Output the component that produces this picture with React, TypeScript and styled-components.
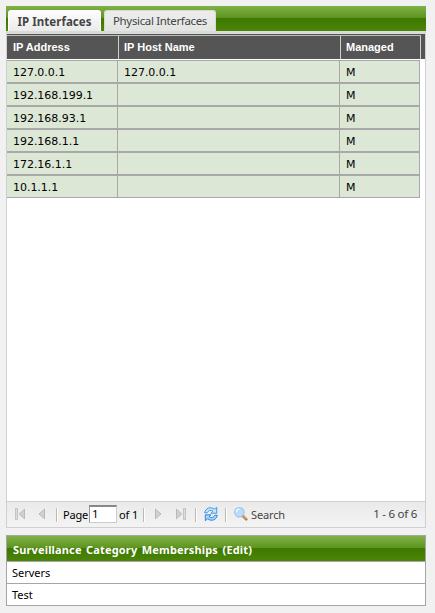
import React from 'react';
import styled, { createGlobalStyle } from 'styled-components';

const GlobalStyle = createGlobalStyle`
  * { box-sizing: border-box; }
  body {
    margin: 0;
    background: #f1f1f1;
    font: 11px 'DejaVu Sans', sans-serif;
    color: #000;
  }
`;

const green = 'linear-gradient(#80b146 0, #5d9420 48%, #3d7800 49%, #4b8608 100%)';

const Page = styled.main`
  width: 435px;
  height: 613px;
  padding: 6px 9px 0 6px;
  overflow: hidden;
`;

const GridPanel = styled.section`
  height: 522px;
  display: flex;
  flex-direction: column;
`;

const TabStrip = styled.nav`
  height: 25px;
  flex: none;
  display: flex;
  gap: 3px;
  padding: 4px 2px 0;
  background: ${green};
`;

const Tab = styled.button<{ $active?: boolean; $width: number }>`
  width: ${p => p.$width}px;
  height: ${p => (p.$active ? 22 : 21)}px;
  margin: 0;
  padding: 0;
  border: 1px solid ${p => (p.$active ? '#fff' : '#d5dccb')};
  border-bottom: 0;
  border-radius: 3px 3px 0 0;
  background: ${p => (p.$active ? 'linear-gradient(#fdfdfd, #e9eae9)' : 'linear-gradient(#ececec, #e3e5e2)')};
  color: #444;
  font: ${p => (p.$active ? "bold 11.5px 'Noto Sans'" : "11.5px 'Noto Sans'")}, sans-serif;
  letter-spacing: ${p => (p.$active ? '0.05px' : '-0.35px')};
  line-height: 20px;
  white-space: nowrap;
`;

const GridBody = styled.div`
  flex: 1;
  display: flex;
  flex-direction: column;
  border: 1px solid #d0d0d0;
  border-top: 3px solid #d8dcd6;
  background: #fff;
`;

const HeaderRow = styled.div`
  display: grid;
  grid-template-columns: 112px 222px 80px 4px;
  height: 25px;
  flex: none;
  background: #555;
  border-top: 1px solid #555;
`;

const HeaderCell = styled.div`
  border-top: 1px solid #bbb;
  border-right: 1px solid #d0d0d0;
  padding-left: 5px;
  color: #fff;
  font: bold 11px/23px 'Liberation Sans', sans-serif;
  &:first-child { padding-left: 6px; }
`;

const Rows = styled.div`
  flex: 1;
  padding-top: 1px;
`;

const Row = styled.div`
  display: grid;
  grid-template-columns: 111px 222px 80px;
  width: 413px;
  height: 23px;
  background: #dde7d6;
  border: solid #a8a8a8;
  border-width: 1px 0;
`;

const Cell = styled.div`
  height: 21px;
  border-right: 1px solid #a8a8a8;
  padding: 1px 0 0 6px;
  line-height: 22px;
  letter-spacing: -0.03px;
`;

const Toolbar = styled.footer`
  height: 26px;
  flex: none;
  display: flex;
  align-items: center;
  border-top: 1px solid #d0d0d0;
  background: linear-gradient(#e9eae9, #f3f3f3);
  font: 11px 'Noto Sans', sans-serif;
  white-space: nowrap;
`;

const Icon = styled.svg<{ $left?: number }>`
  display: block;
  flex: none;
  width: 16px;
  height: 16px;
  margin: 0 0 1px ${p => p.$left ?? 0}px;
`;

const Divider = styled.i<{ $left: number }>`
  flex: none;
  width: 2px;
  height: 14px;
  margin-left: ${p => p.$left}px;
  border-left: 1px solid #bdb9af;
  border-right: 1px solid #fff;
`;

const Label = styled.span<{ $left: number; $width: number; $muted?: boolean; $spacing?: number }>`
  flex: none;
  width: ${p => p.$width}px;
  margin-left: ${p => p.$left}px;
  color: ${p => (p.$muted ? '#444' : '#000')};
  letter-spacing: ${p => p.$spacing ?? 0}px;
`;

const PageInput = styled.input`
  width: 28px;
  height: 18px;
  flex: none;
  margin: 0 0 2px 2px;
  padding: 0 0 1px 2px;
  border: 1px solid #ccc;
  border-top: 2px solid #888;
  border-left-color: #999;
  border-radius: 0;
  background: #fff;
  color: #000;
  font: 11.5px 'Noto Sans', sans-serif;
`;

const Count = styled.span`
  margin: 0 8px 2px auto;
  color: #444;
  font-size: 11.5px;
  letter-spacing: -0.25px;
`;

const Memberships = styled.section`
  margin-top: 7px;
  height: 71px;
  border: 1px solid #a5a5a5;
  background: #fff;
`;

const SectionTitle = styled.h2`
  height: 26px;
  margin: 0;
  padding-left: 6px;
  border-bottom: 1px solid #a5a5a5;
  background: ${green};
  color: #fff;
  font: bold 11px/27px 'Noto Sans', sans-serif;
  letter-spacing: 0.15px;
  word-spacing: 1.5px;
`;

const Category = styled.div`
  height: 22px;
  padding-left: 5px;
  border-bottom: 1px solid #a5a5a5;
  font: 11px/22px 'Noto Sans', sans-serif;
  &:last-child { border-bottom: 0; }
`;

const addresses = [
  ['127.0.0.1', '127.0.0.1'],
  ['192.168.199.1', ''],
  ['192.168.93.1', ''],
  ['192.168.1.1', ''],
  ['172.16.1.1', ''],
  ['10.1.1.1', ''],
];

const Arrow = ({ left, back, end }: { left: number; back?: boolean; end?: boolean }) => (
  <Icon $left={left} viewBox="0 0 16 16">
    <g transform={back ? 'translate(16 0) scale(-1 1)' : undefined}>
      <path d={end ? 'M3.5 3.2v9.6L8.8 8Z' : 'M5.5 3.2v9.6L11 8Z'} fill="#d0d0d0" stroke="#b0b0b0" strokeWidth=".8" />
      {end && <path d="M10.5 2.5h2v11h-2z" fill="#ddd" stroke="#b4b4b4" strokeWidth=".7" />}
    </g>
  </Icon>
);

const refreshArrow = 'M1.7 6.8C2.3 2.2 7.6.2 11.3 3.2L13.7 1.3V7.2H8L9.9 5.1C7.7 3.7 5.4 4.3 4.1 6.8Z';

const Refresh = () => (
  <Icon $left={6} viewBox="0 0 16 16">
    <path d={refreshArrow} fill="#c3e5fd" stroke="#3a8fdc" strokeWidth=".9" />
    <path transform="rotate(180 8 8)" d={refreshArrow} fill="#a5d7fb" stroke="#237fd8" strokeWidth=".9" />
  </Icon>
);

const Magnifier = () => (
  <Icon $left={6} viewBox="0 0 16 16">
    <path d="m10 10 3.3 3.3" stroke="#b17b42" strokeWidth="2.6" strokeLinecap="round" />
    <path d="m10.5 10 2.8 2.8" stroke="#e5a866" strokeWidth="1.2" />
    <circle cx="6.3" cy="6.3" r="4.8" fill="#b9dcfa" stroke="#a4c2e6" strokeWidth="1.1" />
    <path d="M3.4 6.3a3 3 0 0 1 3-3" stroke="#e9f7ff" strokeWidth="1.5" fill="none" />
  </Icon>
);

export default function App() {
  return (
    <Page>
      <GlobalStyle />
      <GridPanel>
        <TabStrip>
          <Tab $active $width={93}>IP Interfaces</Tab>
          <Tab $width={112}>Physical Interfaces</Tab>
        </TabStrip>
        <GridBody>
          <HeaderRow>
            <HeaderCell>IP Address</HeaderCell>
            <HeaderCell>IP Host Name</HeaderCell>
            <HeaderCell>Managed</HeaderCell>
          </HeaderRow>
          <Rows>
            {addresses.map(([ip, host]) => (
              <Row key={ip}>
                <Cell>{ip}</Cell>
                <Cell>{host}</Cell>
                <Cell>M</Cell>
              </Row>
            ))}
          </Rows>
          <Toolbar>
            <Arrow left={5} back end />
            <Arrow left={6} back />
            <Divider $left={6} />
            <Label $left={5} $width={24} $spacing={-0.2}>Page</Label>
            <PageInput defaultValue="1" aria-label="Page" />
            <Label $left={2} $width={18} $spacing={-0.1}>of 1</Label>
            <Divider $left={6} />
            <Arrow left={5} />
            <Arrow left={7} end />
            <Divider $left={6} />
            <Refresh />
            <Divider $left={6} />
            <Magnifier />
            <Label $left={2} $width={34} $muted $spacing={-0.15}>Search</Label>
            <Count>1 - 6 of 6</Count>
          </Toolbar>
        </GridBody>
      </GridPanel>
      <Memberships>
        <SectionTitle>Surveillance Category Memberships (Edit)</SectionTitle>
        <Category>Servers</Category>
        <Category>Test</Category>
      </Memberships>
    </Page>
  );
}
